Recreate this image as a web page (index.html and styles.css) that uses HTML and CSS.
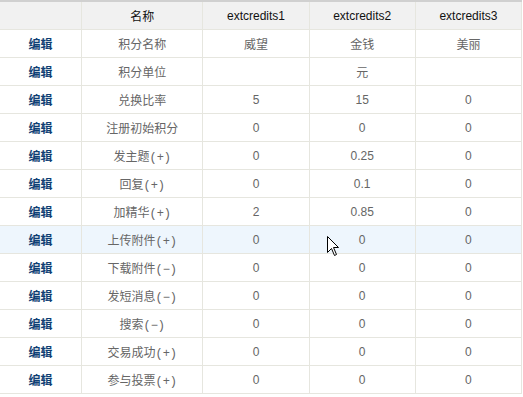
FILE: index.html
```html
<!DOCTYPE html>
<html>
<head>
<meta charset="utf-8">
<link rel="stylesheet" href="styles.css">
</head>
<body>
<table class="grid">
  <thead>
    <tr><th class="c1"></th><th class="c2">名称</th><th class="c3">extcredits1</th><th class="c3">extcredits2</th><th class="c3">extcredits3</th></tr>
  </thead>
  <tbody>
    <tr><td><a class="edit">编辑</a></td><td>积分名称</td><td>威望</td><td>金钱</td><td>美丽</td></tr>
    <tr><td><a class="edit">编辑</a></td><td>积分单位</td><td></td><td>元</td><td></td></tr>
    <tr><td><a class="edit">编辑</a></td><td>兑换比率</td><td>5</td><td>15</td><td>0</td></tr>
    <tr><td><a class="edit">编辑</a></td><td>注册初始积分</td><td>0</td><td>0</td><td>0</td></tr>
    <tr><td><a class="edit">编辑</a></td><td>发主题<span class="sym">(+)</span></td><td>0</td><td>0.25</td><td>0</td></tr>
    <tr><td><a class="edit">编辑</a></td><td>回复<span class="sym">(+)</span></td><td>0</td><td>0.1</td><td>0</td></tr>
    <tr><td><a class="edit">编辑</a></td><td>加精华<span class="sym">(+)</span></td><td>2</td><td>0.85</td><td>0</td></tr>
    <tr class="hover"><td><a class="edit">编辑</a></td><td>上传附件<span class="sym">(+)</span></td><td>0</td><td class="cursor-cell">0<svg class="cursor" width="13" height="21" viewBox="0 0 13 21"><path d="M0.5 0.5 L0.5 16.5 L4.5 12.5 L7.5 19.5 L9.5 18.5 L6.5 11.5 L11.5 11.5 Z" fill="#fff" stroke="#000" stroke-width="1"/></svg></td><td>0</td></tr>
    <tr><td><a class="edit">编辑</a></td><td>下载附件<span class="sym">(−)</span></td><td>0</td><td>0</td><td>0</td></tr>
    <tr><td><a class="edit">编辑</a></td><td>发短消息<span class="sym">(−)</span></td><td>0</td><td>0</td><td>0</td></tr>
    <tr><td><a class="edit">编辑</a></td><td>搜索<span class="sym">(−)</span></td><td>0</td><td>0</td><td>0</td></tr>
    <tr><td><a class="edit">编辑</a></td><td>交易成功<span class="sym">(+)</span></td><td>0</td><td>0</td><td>0</td></tr>
    <tr><td><a class="edit">编辑</a></td><td>参与投票<span class="sym">(+)</span></td><td>0</td><td>0</td><td>0</td></tr>
  </tbody>
</table>
</body>
</html>
```
FILE: styles.css
```css
html, body {
  margin: 0;
  padding: 0;
  background: #fff;
}
.grid {
  border-collapse: separate;
  border-spacing: 0;
  table-layout: fixed;
  width: 522px;
  border-top: 2px solid #d0d0d0;
  font-family: "Liberation Sans", "Noto Sans CJK SC", sans-serif;
  font-size: 12px;
}
.grid th, .grid td {
  height: 27px;
  padding: 0;
  text-align: center;
  vertical-align: middle;
  border-right: 1px solid #e6e6df;
  border-bottom: 1px solid #e6e6df;
  color: #666;
  font-weight: normal;
  white-space: nowrap;
}
.grid th {
  background: #f1f1f1;
  color: #111;
}
.grid .c1 { width: 81px; }
.grid .c2 { width: 120px; }
.grid .c3 { width: 105px; }
.sym {
  font-family: "Liberation Mono", monospace;
}
.edit {
  color: #0f3f74;
  text-decoration: none;
  font-weight: bold;
}
.hover td {
  background: #eef6fd;
}
.cursor-cell {
  position: relative;
}
.cursor {
  position: absolute;
  left: 17px;
  top: 10px;
}
```
